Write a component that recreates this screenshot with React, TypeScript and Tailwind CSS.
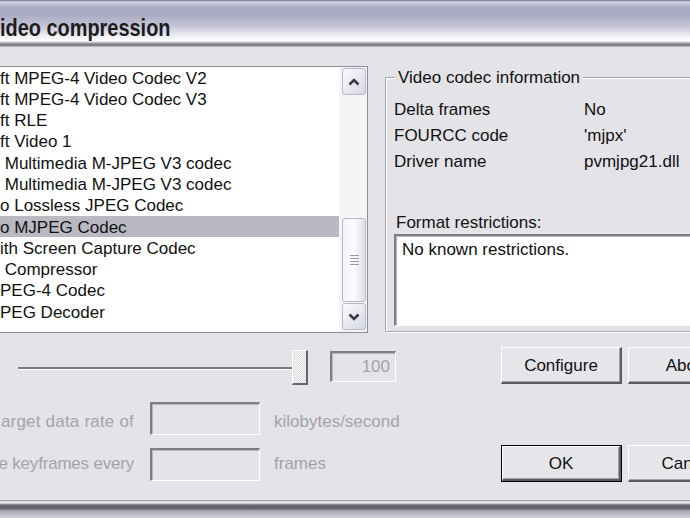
import React from "react";

const items = [
  "ft MPEG-4 Video Codec V2",
  "ft MPEG-4 Video Codec V3",
  "ft RLE",
  "ft Video 1",
  " Multimedia M-JPEG V3 codec",
  " Multimedia M-JPEG V3 codec",
  "o Lossless JPEG Codec",
  "o MJPEG Codec",
  "ith Screen Capture Codec",
  " Compressor",
  "PEG-4 Codec",
  "PEG Decoder",
];

function Chevron({ up }: { up?: boolean }) {
  return (
    <svg width="12" height="8" viewBox="0 0 12 8">
      <path
        d={up ? "M1.5 6.5 L6 2 L10.5 6.5" : "M1.5 1.5 L6 6 L10.5 1.5"}
        fill="none"
        stroke="#3a3a42"
        strokeWidth="2.6"
      />
    </svg>
  );
}

function SunkenBox({ className, children }: { className?: string; children?: React.ReactNode }) {
  return (
    <div
      className={`shrink-0 border-t-2 border-l-2 border-t-[#7e7e84] border-l-[#7e7e84] border-b border-r border-b-white border-r-white shadow-[inset_1px_1px_0_#b8b8bc] ${className ?? ""}`}
    >
      {children}
    </div>
  );
}

function Btn({ label, def }: { label: string; def?: boolean }) {
  return (
    <div className={`shrink-0 w-[121px] h-[37px] ${def ? "border border-black" : ""}`}>
      <div className="w-full h-full bg-[#e6e6ea] border-t border-l border-t-white border-l-white border-b-2 border-r-2 border-b-[#5a5a60] border-r-[#5a5a60] shadow-[inset_-1px_-1px_0_#a4a4aa] flex items-center justify-center pt-[1px] text-[17px] text-[#111] whitespace-nowrap">
        {label}
      </div>
    </div>
  );
}

export default function App() {
  return (
    <div className="w-[690px] h-[518px] overflow-hidden bg-[#e3e3e8] flex flex-col font-['Liberation_Sans',Arial,sans-serif] text-[17px] text-[#111]">
      {/* Title bar */}
      <div className="h-[47px] shrink-0 bg-[linear-gradient(#74748e_0px,#d4d4e2_2px,#aeaec8_7px,#a8a8c2_14px,#c4c4d6_26px,#f2f2f6_37px,#ffffff_41px,#a8a8b2_43px,#6e6e78_45px,#c8c8ce_47px)]">
        <div className="pt-[14px] text-[24px] leading-[28px] font-bold text-[#1c1c1c] whitespace-nowrap">
          <div className="w-max origin-left scale-x-[0.83]">ideo compression</div>
        </div>
      </div>

      {/* Body */}
      <div className="h-[453px] shrink-0 flex flex-col">
        {/* Top section */}
        <div className="flex mt-[19px] h-[267px]">
          {/* List box */}
          <div className="w-[368px] h-[267px] border border-l-0 border-[#8d8d97] bg-white flex shrink-0">
            <div className="flex-1 overflow-hidden">
              {items.map((t, i) => (
                <div
                  key={i}
                  className={`h-[21.3px] pt-[1.5px] leading-[19.8px] whitespace-pre ${i === 7 ? "bg-[#b9b9c1]" : ""}`}
                >
                  {t}
                </div>
              ))}
            </div>
            <div className="w-[28px] bg-[#f5f5f7] flex flex-col pl-[3px] pr-[1px]">
              <div className="mt-[1px] h-[27px] rounded-[3px] border border-[#b6b8c6] bg-[linear-gradient(135deg,#fbfbfd,#d6d8e2)] flex items-center justify-center">
                <Chevron up />
              </div>
              <div className="h-[123px]" />
              <div className="h-[84px] rounded-[3px] border border-[#b6b8c6] bg-[linear-gradient(90deg,#f4f4f8,#fcfcfe_50%,#dcdee6)] flex items-center justify-center">
                <div className="flex flex-col gap-[2px]">
                  <div className="w-[9px] h-[1px] bg-[#9a9aa4]" />
                  <div className="w-[9px] h-[1px] bg-[#9a9aa4]" />
                  <div className="w-[9px] h-[1px] bg-[#9a9aa4]" />
                  <div className="w-[9px] h-[1px] bg-[#9a9aa4]" />
                </div>
              </div>
              <div className="mt-[1px] h-[27px] rounded-[3px] border border-[#b6b8c6] bg-[linear-gradient(135deg,#fbfbfd,#d6d8e2)] flex items-center justify-center">
                <Chevron />
              </div>
            </div>
          </div>

          {/* Group box */}
          <fieldset className="ml-[17px] w-[330px] h-[266px] shrink-0 border border-[#a6a6b0] shadow-[inset_1px_1px_0_#ffffff,1px_1px_0_#ffffff] pl-[8px] pr-0 pb-0 pt-0 m-0">
            <legend className="ml-[1px] px-[3px] pt-[2px] leading-[20px] bg-[#e3e3e8]">Video codec information</legend>
            <div className="mt-[9px] grid grid-cols-[190px_1fr] leading-[26px] whitespace-nowrap">
              <div>Delta frames</div>
              <div>No</div>
              <div>FOURCC code</div>
              <div>'mjpx'</div>
              <div>Driver name</div>
              <div>pvmjpg21.dll</div>
            </div>
            <div className="mt-[38px] pl-[2px] leading-[20px]">Format restrictions:</div>
            <SunkenBox className="mt-[1px] h-[92px] bg-white pl-[6px] pt-[4px] leading-[20px] whitespace-nowrap">
              No known restrictions.
            </SunkenBox>
          </fieldset>
        </div>

        {/* Slider row */}
        <div className="flex items-start mt-[14px] h-[38px]">
          <div className="shrink-0 ml-[18px] w-[274px] mt-[20px] h-[3px] border-t-2 border-t-[#7a7a80] border-b border-b-white" />
          <div className="shrink-0 mt-[3px] w-[16px] h-[35px] border-t border-l border-t-white border-l-white border-b-2 border-r-2 border-b-[#66666c] border-r-[#66666c] bg-[repeating-conic-gradient(#ffffff_0_25%,#d4d4d8_0_50%)] bg-[length:2px_2px]" />
          <SunkenBox className="ml-[22px] mt-[4px] w-[66px] h-[31px] flex items-center justify-end pr-[5px] text-[#a4a4a8]">
            100
          </SunkenBox>
          <div className="shrink-0 ml-[105px]">
            <Btn label="Configure" />
          </div>
          <div className="shrink-0 ml-[6px]">
            <Btn label="About" />
          </div>
        </div>

        {/* Data rate row */}
        <div className="flex items-start mt-[17px] h-[33px] text-[#a4a4a8]">
          <div className="shrink-0 w-[134px] mt-[10px] leading-[20px] whitespace-nowrap overflow-hidden flex justify-end">
            <span className="tracking-[0.2px]">arget data rate of</span>
          </div>
          <SunkenBox className="ml-[16px] w-[110px] h-[33px]" />
          <div className="shrink-0 ml-[14px] mt-[10px] leading-[20px] whitespace-nowrap">kilobytes/second</div>
        </div>

        {/* Keyframes row */}
        <div className="flex items-start mt-[10px] h-[37px]">
          <div className="shrink-0 w-[134px] mt-[9px] leading-[20px] whitespace-nowrap overflow-hidden flex justify-end text-[#a4a4a8]">
            <span className="tracking-[-0.2px]">e keyframes every</span>
          </div>
          <SunkenBox className="ml-[16px] mt-[3px] w-[110px] h-[33px]" />
          <div className="shrink-0 ml-[14px] mt-[9px] w-[213px] leading-[20px] whitespace-nowrap text-[#a4a4a8]">frames</div>
          <div className="shrink-0 ml-[14px]">
            <Btn label="OK" def />
          </div>
          <div className="shrink-0 ml-[6px]">
            <Btn label="Cancel" />
          </div>
        </div>
      </div>

      {/* Bottom frame */}
      <div className="flex-1 bg-[linear-gradient(#8c8c98_0px,#eeeef2_2px,#e8e8ee_3px,#6c6c78_5px,#5c5c68_8px,#a8a8b4_11px,#d4d4dc_18px)]" />
    </div>
  );
}
